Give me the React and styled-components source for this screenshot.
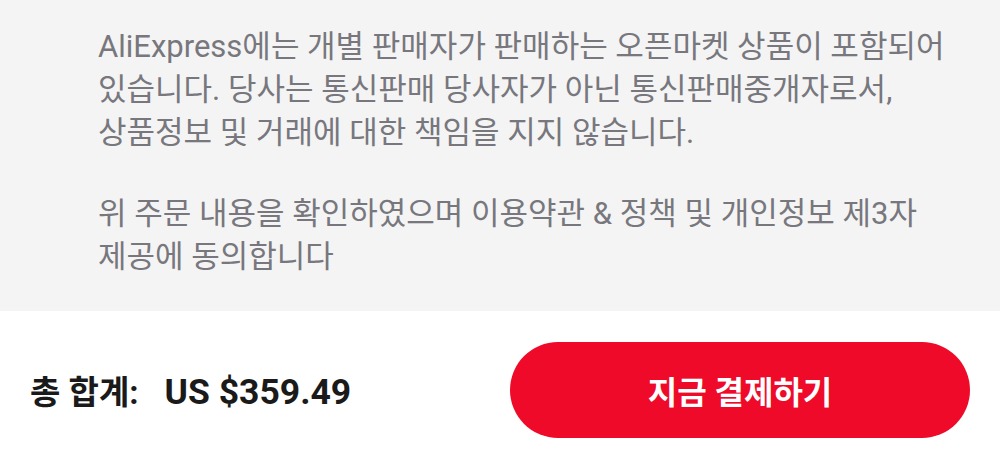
import React from 'react';
import styled, { createGlobalStyle } from 'styled-components';

const GlobalStyle = createGlobalStyle`
  html, body {
    margin: 0;
    padding: 0;
    background: #ffffff;
  }
  body {
    font-family: Roboto, "Noto Sans CJK KR", "Noto Sans", sans-serif;
  }
`;

const App = () => {
    return (
        <Page>
            <GlobalStyle />
            <Notice>
                <Paragraph>
                    AliExpress에는 개별 판매자가 판매하는 오픈마켓 상품이 포함되어
                    <br />
                    있습니다. 당사는 통신판매 당사자가 아닌 통신판매중개자로서,
                    <br />
                    상품정보 및 거래에 대한 책임을 지지 않습니다.
                </Paragraph>
                <Paragraph>
                    위 주문 내용을 확인하였으며 이용약관 &amp; 정책 및 개인정보 제3자
                    <br />
                    제공에 동의합니다
                </Paragraph>
            </Notice>
            <Footer>
                <Total>
                    <Label>총 합계:</Label>
                    <Amount>US $359.49</Amount>
                </Total>
                <PayButton>지금 결제하기</PayButton>
            </Footer>
        </Page>
    );
};

export default App;

const Page = styled.div`
  width: 1000px;
  height: 457px;
  display: flex;
  flex-direction: column;
  overflow: hidden;
`;

const Notice = styled.div`
  background-color: #f4f4f4;
  height: 311px;
  flex-shrink: 0;
  box-sizing: border-box;
  padding: 25px 20px 0 98px;
  display: flex;
  flex-direction: column;
  gap: 38px;
`;

const Paragraph = styled.p`
  margin: 0;
  font-size: 31px;
  line-height: 43px;
  color: #77777d;
  white-space: nowrap;
`;

const Footer = styled.div`
  flex: 1;
  background-color: #ffffff;
  display: flex;
  align-items: center;
  justify-content: space-between;
  padding: 0 30px 0 30px;
`;

const Total = styled.div`
  display: flex;
  align-items: baseline;
  gap: 26px;
  font-weight: 700;
  color: #1a1a1a;
  margin-top: 12px;
  white-space: nowrap;
`;

const Label = styled.span`
  font-size: 33px;
`;

const Amount = styled.span`
  font-size: 35.5px;
`;

const PayButton = styled.button`
  width: 460px;
  height: 96px;
  margin-top: 12px;
  border: none;
  border-radius: 48px;
  background-color: #ee0a28;
  color: #ffffff;
  font-family: inherit;
  font-size: 32px;
  font-weight: 700;
  cursor: pointer;
`;
